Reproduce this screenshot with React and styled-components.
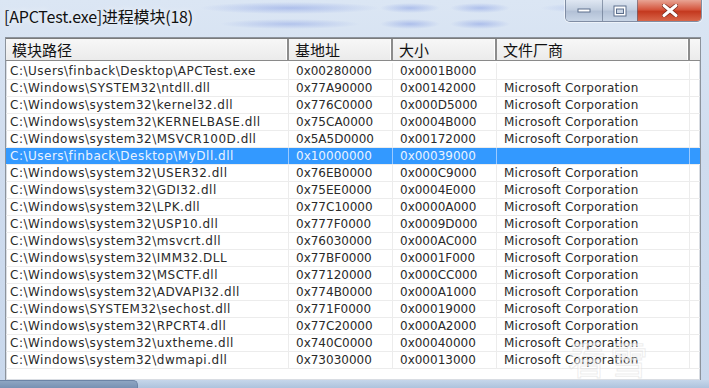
import React from "react";
import styled, { createGlobalStyle } from "styled-components";

const Global = createGlobalStyle`
  html, body { margin: 0; padding: 0; }
  body { width: 709px; height: 388px; overflow: hidden; background: #cddaeb; }
`;

const rows = [
  ["C:\\Users\\finback\\Desktop\\APCTest.exe", "0x00280000", "0x0001B000", ""],
  ["C:\\Windows\\SYSTEM32\\ntdll.dll", "0x77A90000", "0x00142000", "Microsoft Corporation"],
  ["C:\\Windows\\system32\\kernel32.dll", "0x776C0000", "0x000D5000", "Microsoft Corporation"],
  ["C:\\Windows\\system32\\KERNELBASE.dll", "0x75CA0000", "0x0004B000", "Microsoft Corporation"],
  ["C:\\Windows\\system32\\MSVCR100D.dll", "0x5A5D0000", "0x00172000", "Microsoft Corporation"],
  ["C:\\Users\\finback\\Desktop\\MyDll.dll", "0x10000000", "0x00039000", ""],
  ["C:\\Windows\\system32\\USER32.dll", "0x76EB0000", "0x000C9000", "Microsoft Corporation"],
  ["C:\\Windows\\system32\\GDI32.dll", "0x75EE0000", "0x0004E000", "Microsoft Corporation"],
  ["C:\\Windows\\system32\\LPK.dll", "0x77C10000", "0x0000A000", "Microsoft Corporation"],
  ["C:\\Windows\\system32\\USP10.dll", "0x777F0000", "0x0009D000", "Microsoft Corporation"],
  ["C:\\Windows\\system32\\msvcrt.dll", "0x76030000", "0x000AC000", "Microsoft Corporation"],
  ["C:\\Windows\\system32\\IMM32.DLL", "0x77BF0000", "0x0001F000", "Microsoft Corporation"],
  ["C:\\Windows\\system32\\MSCTF.dll", "0x77120000", "0x000CC000", "Microsoft Corporation"],
  ["C:\\Windows\\system32\\ADVAPI32.dll", "0x774B0000", "0x000A1000", "Microsoft Corporation"],
  ["C:\\Windows\\SYSTEM32\\sechost.dll", "0x771F0000", "0x00019000", "Microsoft Corporation"],
  ["C:\\Windows\\system32\\RPCRT4.dll", "0x77C20000", "0x000A2000", "Microsoft Corporation"],
  ["C:\\Windows\\system32\\uxtheme.dll", "0x740C0000", "0x00040000", "Microsoft Corporation"],
  ["C:\\Windows\\system32\\dwmapi.dll", "0x73030000", "0x00013000", "Microsoft Corporation"],
];

const SELECTED = 5;
const COLS = "283px 104px 104px 193px 1fr";

const Page = styled.div`
  position: relative;
  width: 709px;
  height: 388px;
  display: flex;
  flex-direction: column;
  overflow: hidden;
  background:
    radial-gradient(ellipse 90px 6px at 290px 8px, rgba(90,120,220,0.35), transparent),
    radial-gradient(ellipse 70px 5px at 290px 24px, rgba(90,120,220,0.3), transparent),
    radial-gradient(ellipse 30px 5px at 410px 8px, rgba(90,120,220,0.35), transparent),
    radial-gradient(ellipse 30px 5px at 410px 24px, rgba(90,120,220,0.35), transparent),
    radial-gradient(ellipse 30px 5px at 480px 8px, rgba(90,120,220,0.35), transparent),
    radial-gradient(ellipse 30px 5px at 480px 24px, rgba(90,120,220,0.35), transparent),
    radial-gradient(ellipse 60px 5px at 600px 8px, rgba(90,120,220,0.3), transparent),
    linear-gradient(180deg, #dbe6f4 0%, #cfdcee 40%, #c9d8ec 100%);
  font-family: "DejaVu Sans", "Noto Sans CJK SC", sans-serif;
`;

const TitleBar = styled.div`
  height: 37px;
  display: flex;
  justify-content: space-between;
  align-items: flex-start;
  flex-shrink: 0;
`;

const Title = styled.div`
  padding: 6px 0 0 4px;
  font-family: "Noto Sans CJK SC", sans-serif;
  font-size: 16px;
  line-height: 20px;
  color: #111;
  letter-spacing: -0.2px;
  text-shadow: 0 0 6px rgba(255,255,255,0.9);
`;

const Caption = styled.div`
  display: flex;
  margin-right: 7px;
  border: 1px solid rgba(90,105,130,0.7);
  border-top: none;
  border-radius: 0 0 5px 5px;
  overflow: hidden;
  box-shadow: 0 0 0 1px rgba(255,255,255,0.5);
`;

const CapBtn = styled.div`
  width: ${(p) => p.$w}px;
  height: 21px;
  display: flex;
  align-items: center;
  justify-content: center;
  background: ${(p) =>
    p.$close
      ? "linear-gradient(180deg, #e8a494 0%, #d5573f 45%, #c4391f 55%, #d8664a 100%)"
      : "linear-gradient(180deg, #dfe7f2 0%, #c3cfe0 45%, #b3c1d6 55%, #c8d5e6 100%)"};
  border-left: ${(p) => (p.$first ? "none" : "1px solid rgba(90,105,130,0.6)")};
`;

const Body = styled.div`
  flex: 1;
  display: flex;
  padding: 0 8px 0 5px;
  min-height: 0;
`;

const ListView = styled.div`
  flex: 1;
  display: flex;
  flex-direction: column;
  background: #fff;
  border: 1px solid #8c939c;
  border-bottom: none;
  box-shadow: inset 0 0 0 1px #d9dde3;
  font-size: 12px;
  color: #2a2a2a;
`;

const Header = styled.div`
  display: grid;
  grid-template-columns: ${COLS};
  height: 21px;
  background: linear-gradient(180deg, #f7f7f7 0%, #ebebeb 100%);
  border-top: 1px solid #7b7b7b;
  border-bottom: 1px solid #8a8a8a;
  flex-shrink: 0;
`;

const HeadCell = styled.div`
  display: flex;
  align-items: center;
  padding-left: 6px;
  font-family: "Noto Sans CJK SC", sans-serif;
  font-size: 15px;
  color: #111;
  border-right: ${(p) => (p.$last ? "none" : "2px solid #8c8c8c")};
  box-shadow: ${(p) => (p.$last ? "none" : "inset -1px 0 0 #fff")};
`;

const Rows = styled.div`
  display: flex;
  flex-direction: column;
  margin-top: 2px;
`;

const Row = styled.div`
  display: grid;
  grid-template-columns: ${COLS};
  height: 17px;
  box-sizing: border-box;
  border-bottom: 1px solid #ececec;
  background: ${(p) => (p.$sel ? "#3399ff" : "transparent")};
  color: ${(p) => (p.$sel ? "#eaf3ff" : "#2a2a2a")};
`;

const Cell = styled.div`
  padding-left: ${(p) => (p.$first ? 4 : 7)}px;
  line-height: 16px;
  letter-spacing: ${(p) => p.$ls || 0}px;
  white-space: nowrap;
  overflow: hidden;
  border-right: 1px solid ${(p) => (p.$sel ? "#9ccaff" : "#ececec")};
`;

const Filler = styled.div``;

const BottomStrip = styled.div`
  height: 8px;
  flex-shrink: 0;
  display: flex;
  align-items: flex-end;
  background: linear-gradient(180deg, #c6d6ea, #aec3dd);
`;

const Tab = styled.div`
  width: 137px;
  height: 7px;
  background: linear-gradient(180deg, #8ea5c2, #7891b3);
  border-top-right-radius: 5px;
  border: 1px solid #6d84a6;
  border-left: none;
  border-bottom: none;
`;

const Watermark = styled.div`
  position: absolute;
  left: 568px;
  top: 330px;
  font-family: "Noto Sans CJK SC", sans-serif;
  font-size: 38px;
  letter-spacing: 4px;
  color: rgba(255,255,255,0.5);
  -webkit-text-stroke: 1px rgba(215,215,215,0.45);
  pointer-events: none;
`;

export default function App() {
  return (
    <>
      <Global />
      <Page>
        <TitleBar>
          <Title>[APCTest.exe]进程模块(18)</Title>
          <Caption>
            <CapBtn $w={36} $first>
              <svg width="14" height="6" viewBox="0 0 14 6">
                <rect x="1" y="1" width="12" height="3" fill="#fff" stroke="#5c6f8c" strokeWidth="1" />
              </svg>
            </CapBtn>
            <CapBtn $w={34}>
              <svg width="14" height="12" viewBox="0 0 14 12">
                <rect x="1" y="1" width="12" height="10" fill="#fff" stroke="#5c6f8c" strokeWidth="1" />
                <rect x="3.5" y="4" width="7" height="4.5" fill="#c8d3e3" stroke="#5c6f8c" strokeWidth="1" />
              </svg>
            </CapBtn>
            <CapBtn $w={63} $close>
              <svg width="16" height="13" viewBox="0 0 16 13">
                <path d="M2 1.5 L14 11.5 M14 1.5 L2 11.5" stroke="#7a2a1e" strokeWidth="4.5" strokeLinecap="round" />
                <path d="M2 1.5 L14 11.5 M14 1.5 L2 11.5" stroke="#fff" strokeWidth="3" strokeLinecap="round" />
              </svg>
            </CapBtn>
          </Caption>
        </TitleBar>
        <Body>
          <ListView>
            <Header>
              <HeadCell>模块路径</HeadCell>
              <HeadCell>基地址</HeadCell>
              <HeadCell>大小</HeadCell>
              <HeadCell>文件厂商</HeadCell>
              <HeadCell $last />
            </Header>
            <Rows>
              {rows.map((r, i) => (
                <Row key={i} $sel={i === SELECTED}>
                  <Cell $first $ls={0.5} $sel={i === SELECTED}>{r[0]}</Cell>
                  <Cell $sel={i === SELECTED}>{r[1]}</Cell>
                  <Cell $sel={i === SELECTED}>{r[2]}</Cell>
                  <Cell $ls={0.25} $sel={i === SELECTED}>{r[3]}</Cell>
                  <Filler />
                </Row>
              ))}
            </Rows>
          </ListView>
        </Body>
        <BottomStrip>
          <Tab />
        </BottomStrip>
        <Watermark>看雪</Watermark>
      </Page>
    </>
  );
}
